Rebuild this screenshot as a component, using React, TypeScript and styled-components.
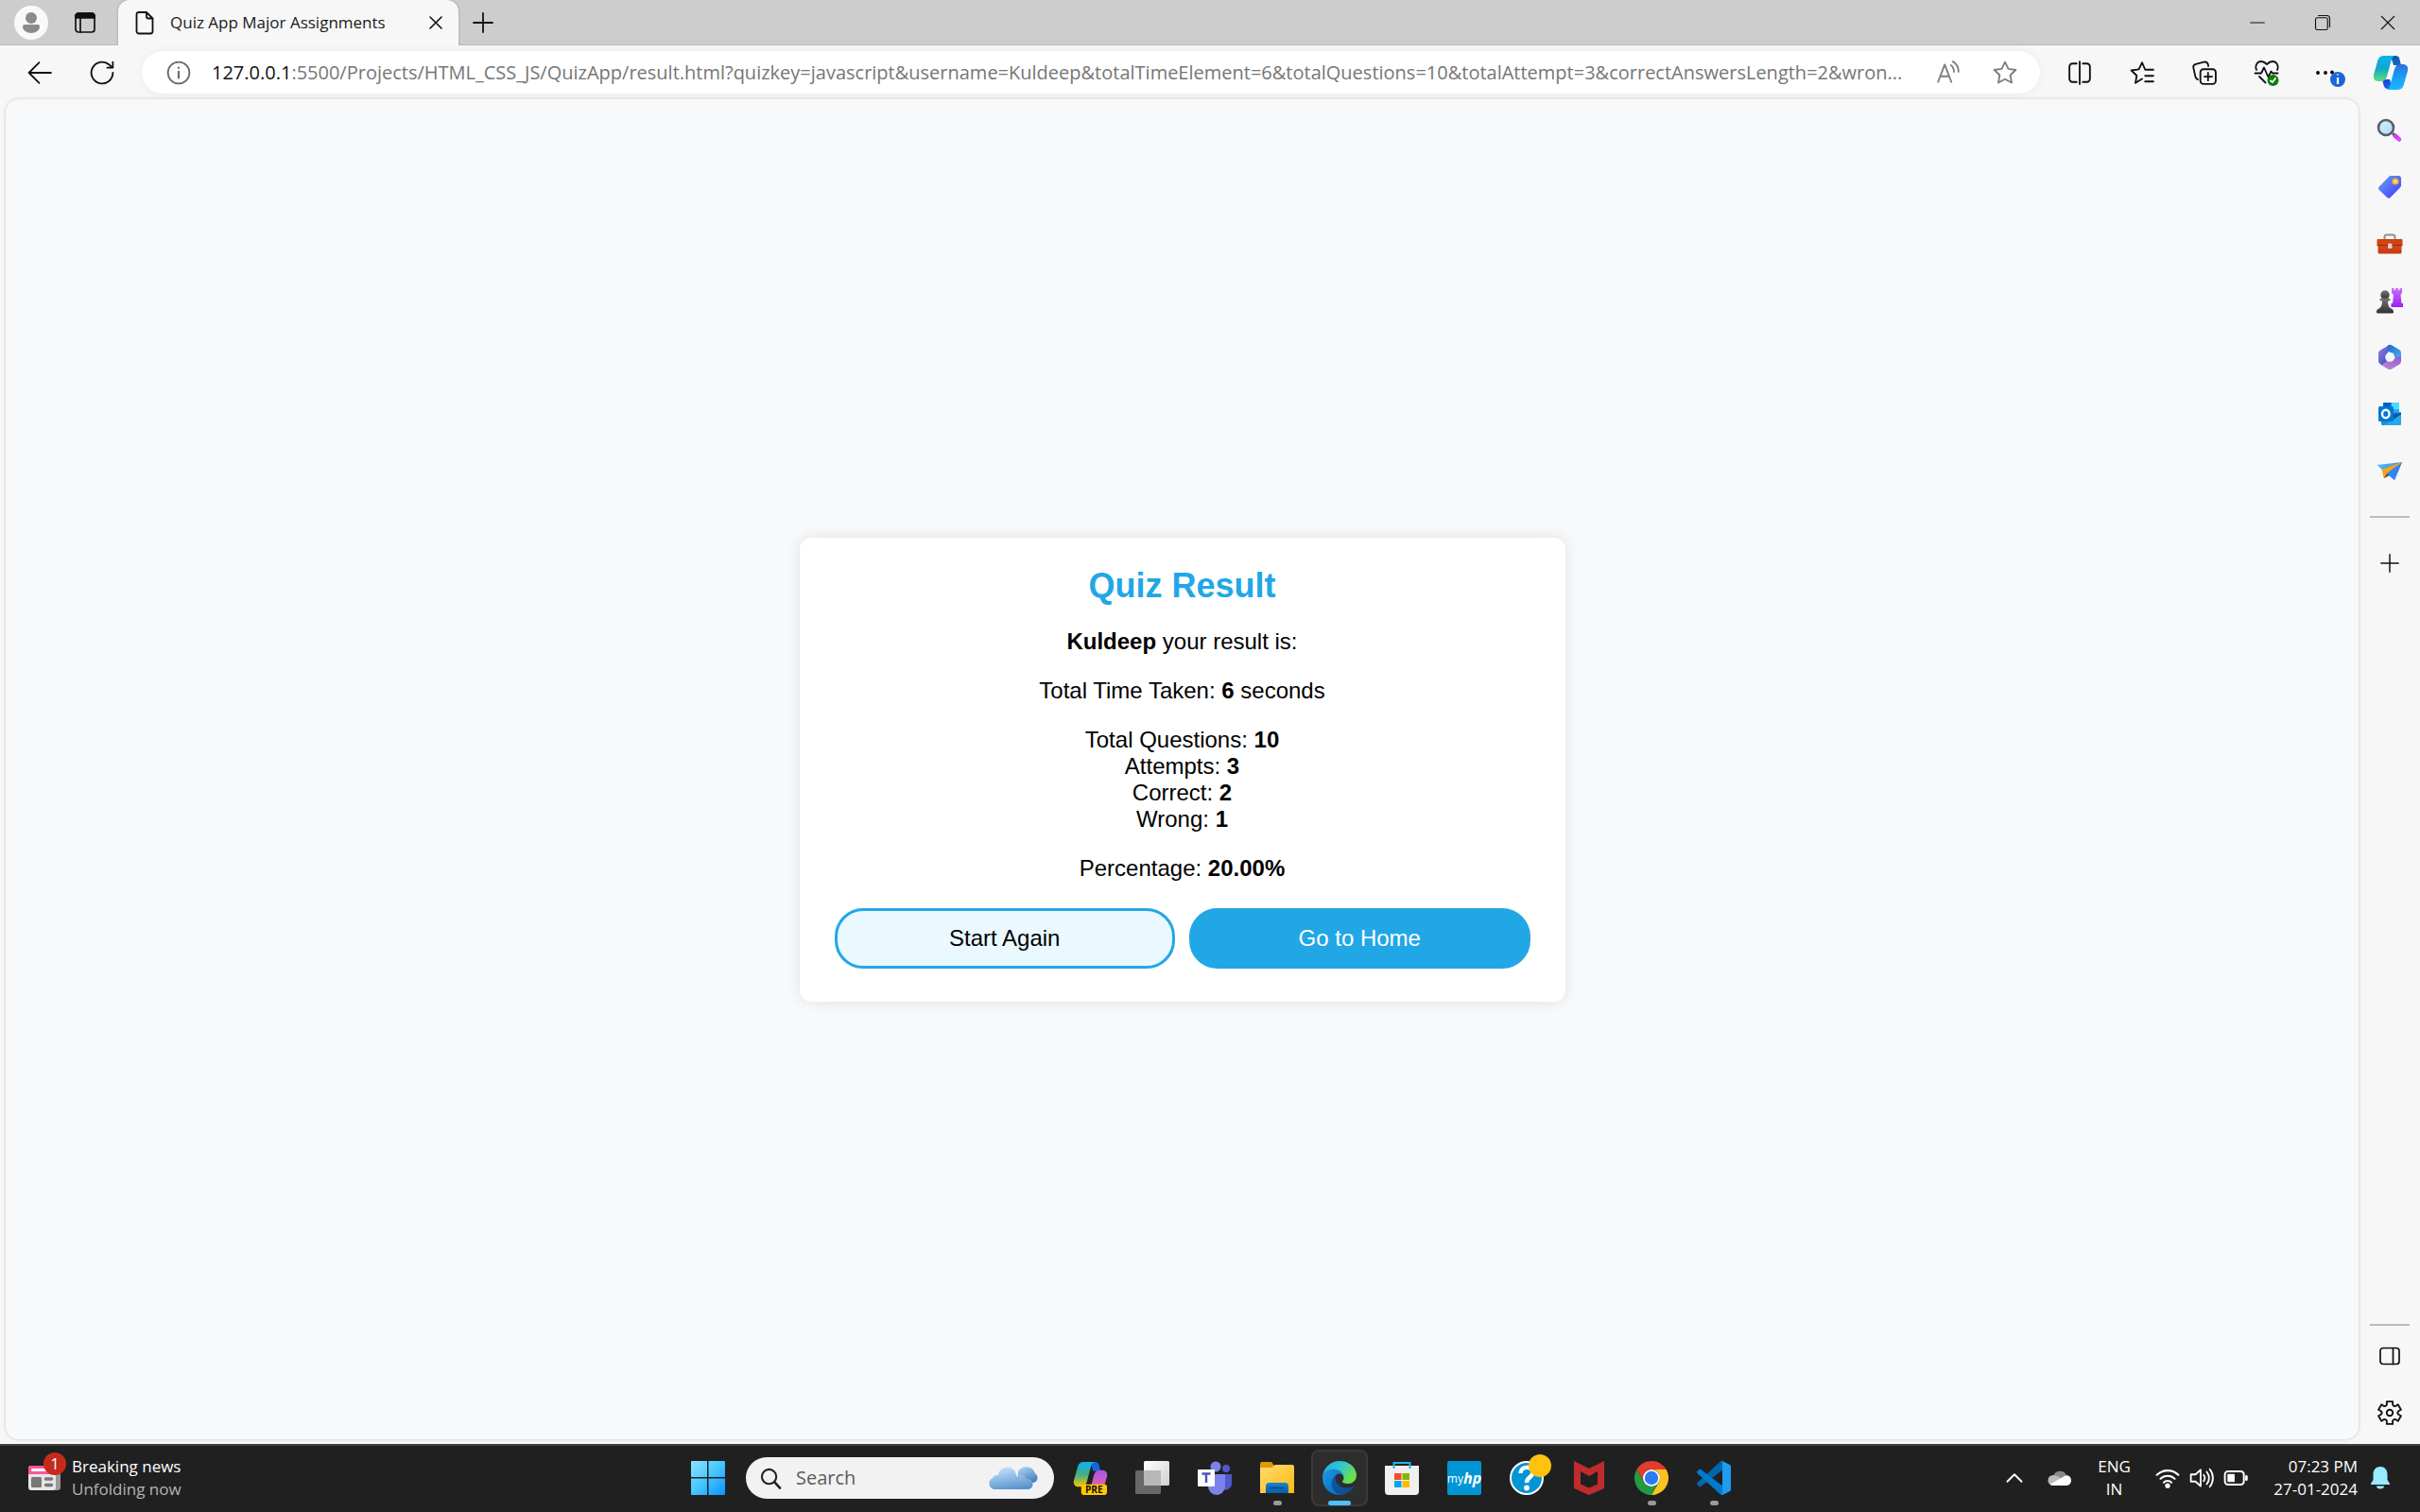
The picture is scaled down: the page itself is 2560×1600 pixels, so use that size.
import React from "react";
import styled, { createGlobalStyle } from "styled-components";

const UI_FONT = `"Open Sans", "Noto Sans", sans-serif`;
const PAGE_FONT = `"Liberation Sans", Arial, sans-serif`;

const GlobalStyle = createGlobalStyle`
  *, *::before, *::after { box-sizing: border-box; }
  body { margin: 0; font-family: ${UI_FONT}; }
  button, input { font: inherit; }
`;

/* ---------- layout ---------- */

const Desktop = styled.div`
  display: flex;
  flex-direction: column;
  min-height: 100vh;
  background: #f7f7f7;
`;

const IconButton = styled.button<{ $w?: number; $h?: number }>`
  display: inline-flex;
  align-items: center;
  justify-content: center;
  flex: none;
  width: ${(p) => p.$w ?? 60}px;
  height: ${(p) => p.$h ?? 48}px;
  padding: 0;
  border: 0;
  background: none;
  color: #111;
  svg { display: block; }
`;

const TitleBar = styled.header`
  display: flex;
  align-items: stretch;
  height: 48px;
  background: #cdcdcd;
  box-shadow: inset 0 -1px 0 #b9b9b9;
`;

const Profile = styled.div`
  display: flex;
  align-items: center;
  padding-left: 15px;
  width: 125px;
  flex: none;
`;

const Tab = styled.div`
  display: flex;
  align-items: center;
  width: 360px;
  padding: 0 8px 0 18px;
  border-radius: 12px 12px 0 0;
  background: #f7f7f7;
  box-shadow: 0 0 3px rgba(0, 0, 0, 0.25);
  clip-path: inset(0 -4px 0 -4px);
`;

const TabTitle = styled.span`
  flex: 1;
  padding-left: 17px;
  font-size: 17px;
  line-height: 24px;
  white-space: nowrap;
  color: #1a1a1a;
`;

const WindowControls = styled.div`
  display: flex;
  margin-left: auto;
`;

const Toolbar = styled.nav`
  display: flex;
  align-items: center;
  height: 57px;
  padding-left: 9px;
`;

const AddressBar = styled.form`
  display: flex;
  align-items: center;
  flex: 1;
  min-width: 0;
  height: 45px;
  margin-left: 9px;
  padding: 0 7px 0 9px;
  border-radius: 23px;
  background: #fff;
  box-shadow: 0 0 8px rgba(0, 0, 0, 0.06);
  font-size: 20px;
  line-height: 28px;
`;

const Host = styled.label`
  padding-left: 5px;
  color: #111;
`;

const UrlInput = styled.input`
  flex: 1;
  min-width: 0;
  padding: 0;
  border: 0;
  outline: 0;
  background: none;
  color: #767676;
  text-overflow: ellipsis;
`;

const ToolGroup = styled.div`
  display: flex;
  align-items: center;
  padding-left: 9px;
`;

const Main = styled.div`
  display: flex;
  flex: 1;
`;

const Viewport = styled.main`
  display: flex;
  align-items: center;
  justify-content: center;
  flex: 1;
  margin: 0 0 5px 6px;
  border-radius: 14px;
  background: #f8f9fb;
  box-shadow: 0 0 3px 1px rgba(0, 0, 0, 0.12);
`;

const Sidebar = styled.aside`
  display: flex;
  flex-direction: column;
  align-items: center;
  width: 65px;
  padding: 3px 0;
`;

const Divider = styled.hr<{ $bottom?: boolean }>`
  width: 42px;
  height: 2px;
  margin: ${(p) => (p.$bottom ? "auto 0 2px" : "18px 0")};
  border: 0;
  background: #bdbdbd;
`;

/* ---------- result card ---------- */

const Card = styled.section`
  display: flex;
  flex-direction: column;
  gap: 24px;
  width: 810px;
  padding: 30px 37px 35px;
  border-radius: 12px;
  background: #fff;
  box-shadow: 0 0 15px rgba(0, 0, 0, 0.1);
  font-family: ${PAGE_FONT};
  font-size: 24px;
  line-height: 28px;
  text-align: center;
  color: #000;
`;

const CardTitle = styled.h1`
  margin: 0;
  font-size: 36px;
  line-height: 42px;
  color: #22a7e6;
`;

const Line = styled.p`
  margin: 0;
`;

const Actions = styled.div`
  display: flex;
  gap: 15px;
  padding-top: 4px;
`;

const ActionButton = styled.button<{ $primary?: boolean }>`
  flex: 1;
  height: 64px;
  border: 3px solid #22a7e6;
  border-radius: 30px;
  background: ${(p) => (p.$primary ? "#22a7e6" : "#eaf8ff")};
  color: ${(p) => (p.$primary ? "#fff" : "#000")};
`;

/* ---------- taskbar ---------- */

const Taskbar = styled.footer`
  display: grid;
  grid-template-columns: 1fr auto 1fr;
  align-items: center;
  height: 72px;
  padding-bottom: 2px;
  border-top: 2px solid #414141;
  background: #202020;
  color: #fff;
  font-size: 18px;
  line-height: 24px;
`;

const News = styled.button`
  display: flex;
  align-items: center;
  justify-self: start;
  padding: 0 0 0 30px;
  border: 0;
  background: none;
  color: #fff;
  text-align: left;
`;

const NewsIcon = styled.span`
  position: relative;
  display: block;
  width: 34px;
  height: 26px;
`;

const Badge = styled.span`
  position: absolute;
  right: -6px;
  top: -14px;
  width: 24px;
  height: 24px;
  border-radius: 50%;
  background: #c42b1c;
  font-size: 16px;
  text-align: center;
`;

const NewsText = styled.span`
  display: grid;
  padding-left: 12px;
  font-size: 17px;
`;

const Muted = styled.span`
  color: #b4b4b4;
`;

const Apps = styled.div`
  display: flex;
  align-items: center;
  padding-left: 2px;
`;

const SearchBox = styled.label`
  display: flex;
  align-items: center;
  width: 326px;
  height: 44px;
  margin: 0 5px 0 7px;
  padding: 0 17px 0 15px;
  border-radius: 22px;
  background: #f2f2f2;
`;

const SearchInput = styled.input`
  flex: 1;
  min-width: 0;
  padding: 0 0 0 15px;
  border: 0;
  outline: 0;
  background: none;
  font-size: 20px;
  &::placeholder { color: #5c5c5c; opacity: 1; }
`;

const AppButton = styled.button<{ $active?: boolean }>`
  position: relative;
  display: flex;
  align-items: center;
  justify-content: center;
  width: 60px;
  height: 60px;
  margin: 0 3px;
  padding: 0;
  border: ${(p) => (p.$active ? "2px solid #3a3a3a" : "0")};
  border-radius: 8px;
  background: ${(p) => (p.$active ? "#2d2d2d" : "none")};
  svg { display: block; overflow: visible; }
`;

const Indicator = styled.span<{ $active?: boolean }>`
  position: absolute;
  bottom: ${(p) => (p.$active ? -1 : 1)}px;
  width: ${(p) => (p.$active ? 24 : 9)}px;
  height: 5px;
  border-radius: 3px;
  background: ${(p) => (p.$active ? "#4cc2ff" : "#9a9a9a")};
`;

const HpTile = styled.span`
  display: flex;
  align-items: center;
  justify-content: center;
  width: 36px;
  height: 36px;
  border-radius: 2px;
  background: #0096d6;
  color: #fff;
  font: 12px "Open Sans", sans-serif;
  b { font: italic bold 16px "Open Sans", sans-serif; }
`;

const Tray = styled.div`
  display: flex;
  align-items: center;
  justify-self: end;
  padding-right: 18px;
`;

const Stack = styled.div<{ $right?: boolean }>`
  display: grid;
  text-align: ${(p) => (p.$right ? "right" : "center")};
`;

const TrayButton = styled(IconButton)`
  color: #fff;
`;

const Language = styled(Stack)`
  width: 72px;
  padding-right: 5px;
  font-size: 17px;
`;

const Clock = styled(Stack)`
  width: 111px;
  font-size: 17px;
`;

/* ---------- icons ---------- */

type LineProps = { size?: number; sw?: number; color?: string; children: React.ReactNode };

const LineIcon = ({ size = 24, sw = 1.7, color = "currentColor", children }: LineProps) => (
  <svg width={size} height={size} viewBox="0 0 24 24" fill="none" stroke={color} strokeWidth={sw} strokeLinecap="round" strokeLinejoin="round" aria-hidden="true">
    {children}
  </svg>
);

const ColorIcon = ({ size = 28, box = 28, children }: { size?: number; box?: number; children: React.ReactNode }) => (
  <svg width={size} height={size} viewBox={`0 0 ${box} ${box}`} aria-hidden="true">
    {children}
  </svg>
);

const Grad = ({ id, from, to, mid, x1 = 0, y1 = 0, x2 = 1, y2 = 1 }: { id: string; from: string; to: string; mid?: string; x1?: number; y1?: number; x2?: number; y2?: number }) => (
  <linearGradient id={id} x1={x1} y1={y1} x2={x2} y2={y2}>
    <stop offset="0" stopColor={from} />
    {mid && <stop offset=".5" stopColor={mid} />}
    <stop offset="1" stopColor={to} />
  </linearGradient>
);

const gearPath = (() => {
  const points: string[] = [];
  for (let i = 0; i < 6; i++) {
    const base = i * 60 - 90;
    ([[-15, 11.4], [15, 11.4], [19, 8.6], [30, 7.6], [41, 8.6]] as const).forEach(([offset, r]) => {
      const a = ((base + offset) * Math.PI) / 180;
      points.push(`${(12 + r * Math.cos(a)).toFixed(2)} ${(12 + r * Math.sin(a)).toFixed(2)}`);
    });
  }
  return `M${points.join("L")}Z`;
})();

const CloseGlyph = () => <LineIcon size={16}><path d="M3 3l18 18M21 3L3 21" strokeWidth="2.4" /></LineIcon>;
const PlusGlyph = () => <LineIcon size={24} sw={1.8}><path d="M12 2v20M2 12h20" /></LineIcon>;

const Copilot = ({ id, size, pre }: { id: string; size: number; pre?: boolean }) => (
  <ColorIcon size={size} box={36}>
    <defs>
      <Grad id={`${id}a`} from="#0bb4f0" mid={pre ? "#3fae8c" : "#10a7c8"} to={pre ? "#ffc400" : "#5ee07a"} x2={0} />
      <Grad id={`${id}b`} from={pre ? "#a557e8" : "#2a6fe0"} mid={pre ? "#d85bc0" : "#1a9df5"} to={pre ? "#ff7a55" : "#1cb8ff"} x2={0} />
      <Grad id={`${id}c`} from={pre ? "#0f6ad8" : "#0a5a90"} to="#1766d8" />
      <Grad id={`${id}d`} from={pre ? "#ff6a70" : "#1238d8"} to={pre ? "#ff8a60" : "#1a78f0"} />
    </defs>
    <path d="M9 25h8l3 10h-5c-3 0-4-2-4.500-4z" fill={`url(#${id}d)`} />
    <path d="M18 0h5c3 0 4 2 4.500 4l1.500 6h-8z" fill={`url(#${id}c)`} />
    <path d="M11 0h11c-2 1-3 3-3.700 6l-4 15c-1 4-3 6-6 6H5c-4 0-6-3-5-7L4 6C5 2 7 0 11 0z" fill={`url(#${id}a)`} />
    <path d="M25 36H14c2-1 3-3 3.700-6l4-15c1-4 3-6 6-6H31c4 0 6 3 5 7l-4 14c-1 4-3 6-7 6z" fill={`url(#${id}b)`} />
    {pre && <rect x="8" y="24.500" width="28" height="11.500" rx="2.500" fill="#ffc800" />}
    {pre && <text x="22" y="34" fontFamily="Open Sans, sans-serif" fontSize="10.500" fontWeight="700" textAnchor="middle" fill="#111">PRE</text>}
  </ColorIcon>
);

const SearchColor = () => (
  <ColorIcon>
    <defs><Grad id="lens" from="#d8f2ff" to="#a9d9f8" /><Grad id="handle" from="#c03cf0" to="#d84cff" /></defs>
    <path d="M17 17l3 3" stroke="#555" strokeWidth="3" />
    <path d="M19.500 19.500l4.500 4" stroke="url(#handle)" strokeWidth="4.500" strokeLinecap="round" />
    <circle cx="10" cy="11" r="8" fill="url(#lens)" stroke="#5f5f5f" strokeWidth="2.600" />
  </ColorIcon>
);

const TagColor = () => (
  <ColorIcon>
    <defs><Grad id="tag" from="#6aa5ff" to="#4038f0" /></defs>
    <path d="M15 2h8.500c1.500 0 2.500 1 2.500 2.500V12c0 1-.3 1.700-1 2.400L14.600 25c-1 1-2.400 1-3.400 0L2.800 17c-1-1-1-2.500 0-3.500L13 3c.6-.7 1.200-1 2-1z" fill="url(#tag)" />
    <circle cx="20" cy="8" r="2.500" fill="#dbe8ff" stroke="#f5b91b" strokeWidth="2" />
  </ColorIcon>
);

const ToolboxColor = () => (
  <ColorIcon>
    <defs><Grad id="box" from="#dd4f1a" to="#c43a12" x2={0} /></defs>
    <path d="M8.500 10V6.500C8.500 5 9.500 4.500 11 4.500h6c1.500 0 2.500.5 2.500 2V10" fill="none" stroke="#909090" strokeWidth="2" />
    <rect x="1.500" y="12" width="25" height="12.500" rx="1.500" fill="url(#box)" />
    <path d="M1.500 9h25a1 1 0 0 1 1 1v5H.5v-5a1 1 0 0 1 1-1z" fill="#d3430f" />
    <path d="M.5 15h27v1.200H.5z" fill="#a52c0a" />
    <rect x="12" y="13.500" width="4.500" height="5.500" rx="1.500" fill="#d5d5d5" />
  </ColorIcon>
);

const ChessColor = () => (
  <ColorIcon>
    <defs><Grad id="rook" from="#c573f5" to="#a01df5" x2={0} /><Grad id="pawn" from="#777" to="#303030" x2={0} /></defs>
    <path d="M16 1h2.500v2H20V1h3v2h1.500V1H27v5l-1.500 2 1 9h1.500v4H15.500v-4H17l1-9-2-2z" fill="url(#rook)" />
    <circle cx="9" cy="8" r="4.700" fill="url(#pawn)" />
    <path d="M3.500 13c0-1 1-1.500 2-1.500h7c1 0 2 .5 2 1.500s-1 1.500-2.500 1.500c.3 5 1 6.500 3.500 8 2 1 2.500 2 2.500 3.500 0 1-.6 1.500-1.500 1.500h-15C.6 27.500 0 27 0 26c0-1.500.5-2.500 2.500-3.500 2.500-1.500 3.200-3 3.500-8-1.500 0-2.500-.5-2.500-1.500z" fill="url(#pawn)" />
  </ColorIcon>
);

const M365 = () => (
  <ColorIcon>
    <defs>
      <Grad id="ma" from="#2c5fc8" to="#3eb9ef" /><Grad id="mb" from="#9b7de8" to="#2c4fb8" /><Grad id="mc" from="#8a5fd0" to="#c58ad8" x1={1} x2={0} />
    </defs>
    <path d="M14 .8L4.200 6.500C2.800 7.300 2 8.500 2 10v8c0 1.500.8 2.700 2.200 3.500L6 22.500l6-4.500V6z" fill="url(#mb)" />
    <path d="M12 1.300c1.300-.7 2.700-.7 4 0l8 4.700c1.300.8 2 2 2 3.500V17l-7-3-1-4-6-2-2 1z" fill="url(#ma)" />
    <path d="M26 13v5.300c0 1.500-.7 2.700-2 3.500l-8 4.700c-1.300.7-2.700.7-4 0L4 21.800c3.500.6 5-1.300 7-3.300l6-.5 3-4z" fill="url(#mc)" />
    <circle cx="14" cy="14" r="4.800" fill="#f7f7f7" />
  </ColorIcon>
);

const Outlook = () => (
  <ColorIcon>
    <path d="M7 2h17v13H7z" fill="#28a8ea" /><path d="M15.500 2H24v7h-8.500z" fill="#50d9ff" /><path d="M7 2h8.500v6H7z" fill="#0364b8" />
    <path d="M5 14l21-2v12.500c0 .8-.7 1.500-1.500 1.500h-18C5.700 26 5 25.300 5 24.500z" fill="#1490df" />
    <path d="M26 13L8 26h16.500c.8 0 1.500-.7 1.500-1.500z" fill="#28a8ea" /><path d="M16 14l10-1v1.500l-9 6z" fill="#0a58a0" />
    <rect x="2" y="6" width="16" height="16" rx="1.500" fill="#0078d4" />
    <ellipse cx="9.800" cy="14" rx="3.800" ry="4.200" fill="none" stroke="#fff" strokeWidth="2.400" />
  </ColorIcon>
);

const PaperPlane = () => (
  <ColorIcon>
    <defs><Grad id="plane" from="#58c8fa" to="#2264e0" /></defs>
    <path d="M.5 8L27 5l-8 19-6-5-5 3-2-9z" fill="url(#plane)" />
    <path d="M27 5L5.500 13 8 22l3-5z" fill="#f3a51b" /><path d="M8 22l3-5 3 2z" fill="#7b4a1a" /><path d="M27 5L11 17l8 7z" fill="#3284f2" />
    <path d="M27 5.500L5.500 13l2 4.500 2-1z" fill="#f3a51b" />
  </ColorIcon>
);

const WindowsLogo = () => (
  <ColorIcon size={36} box={36}>
    <defs><Grad id="win" from="#8be4ff" mid="#45c7ff" to="#0a92ff" /></defs>
    <path d="M1 0h16v17H0V1a1 1 0 0 1 1-1zM18.500 0H35a1 1 0 0 1 1 1v16H18.500zM0 18.500h17V36H1a1 1 0 0 1-1-1zM18.500 18.500H36V35a1 1 0 0 1-1 1H18.500z" fill="url(#win)" />
  </ColorIcon>
);

const CloudArt = () => (
  <svg width="54" height="26" viewBox="0 0 54 26" aria-hidden="true">
    <defs><Grad id="ca" from="#c5e2fb" to="#5793cc" x1={0.3} x2={0.6} /><Grad id="cb" from="#b4d6f4" to="#4a86c0" x2={0.5} /></defs>
    <path d="M33 6a10 10 0 0 1 18 2 5.500 5.500 0 0 1-2 10H33z" fill="url(#cb)" />
    <path d="M7 25a6.500 6.500 0 0 1-1-12 6 6 0 0 1 6-3 9.500 9.500 0 0 1 18-3c1 1.500 1.500 3 1.500 4.500A6.500 6.500 0 0 1 42 14a5.500 5.500 0 0 1 2 11z" fill="url(#ca)" />
  </svg>
);

const TaskView = () => (
  <ColorIcon size={36} box={36}>
    <defs><Grad id="tv" from="#fff" to="#d0d0d0" /></defs>
    <rect x="0" y="10" width="27" height="25" rx="1.500" fill="#686868" /><rect x="9" y="0" width="27" height="26" rx="1.500" fill="url(#tv)" />
    <path d="M9 10h18v16H9z" fill="#b8b8b8" />
  </ColorIcon>
);

const Teams = () => (
  <ColorIcon size={36} box={36}>
    <circle cx="19" cy="6" r="5.500" fill="#7b83eb" /><circle cx="30" cy="8" r="4" fill="#5059c9" />
    <path d="M25 14h11v10a7 7 0 0 1-10 6z" fill="#5059c9" /><path d="M10 14h19v13a9 9 0 0 1-18 0z" fill="#7b83eb" />
    <rect x="0" y="9" width="18" height="18" rx="1" fill="#fff" /><path d="M4.500 13.500h9M9 13.500V23" stroke="#4b53bc" strokeWidth="2.400" />
  </ColorIcon>
);

const Explorer = () => (
  <ColorIcon size={36} box={36}>
    <defs><Grad id="fold" from="#ffdc70" to="#fbb914" /><Grad id="tray" from="#1584d0" to="#0a5fa8" x2={0} /></defs>
    <path d="M0 3a2 2 0 0 1 2-2h10l3 4-3 4H0z" fill="#dd9a05" />
    <path d="M0 7h12l4-3h18a2 2 0 0 1 2 2v28H0z" fill="url(#fold)" />
    <path d="M6 34V27a4 4 0 0 1 4-4h16a4 4 0 0 1 4 4v7z" fill="url(#tray)" /><path d="M11 28.500h14" stroke="#074c8c" strokeWidth="2" strokeLinecap="round" />
  </ColorIcon>
);

const Edge = () => (
  <ColorIcon size={36} box={256}>
    <defs><Grad id="ea" from="#0c59a4" to="#114a8b" /><Grad id="eb" from="#1b9de2" mid="#127fd0" to="#0866b8" /><Grad id="ec" from="#2aa8e8" mid="#2fc4d4" to="#6be24a" y2={0.5} /></defs>
    <path d="M231 190.500c-3.400 1.800-6.900 3.400-10.500 4.700a101.400 101.400 0 0 1-35.900 6.500c-47.300 0-88.500-32.500-88.500-74.300a31.500 31.500 0 0 1 16.400-27.300c-42.800 1.800-53.800 46.400-53.800 72.500 0 74 68.100 81.400 82.800 81.400 7.900 0 19.800-2.300 27-4.600l1.300-.4a128.300 128.300 0 0 0 66.600-52.800 4 4 0 0 0-5.400-5.700z" fill="url(#ea)" />
    <path d="M105.700 241.400a79.200 79.200 0 0 1-22.700-21.300 80.700 80.700 0 0 1 29.500-120c3.200-1.500 8.500-4.100 15.600-4a32.400 32.400 0 0 1 25.700 13 31.900 31.900 0 0 1 6.300 18.700c0-.2 24.500-79.600-80-79.600-43.900 0-80 41.600-80 78.200a130.200 130.200 0 0 0 12.100 56 128 128 0 0 0 156.400 67 75.500 75.500 0 0 1-62.800-8z" fill="url(#eb)" />
    <path d="M152.300 148.900c-.9 1-3.400 2.500-3.400 5.600 0 2.600 1.700 5.200 4.800 7.300 14.300 10 41.400 8.600 41.500 8.600a59.600 59.600 0 0 0 30.300-8.300 61.400 61.400 0 0 0 30.400-52.900c.3-22.400-8-37.300-11.300-43.900C223.500 23.900 177.700 0 128 0A128 128 0 0 0 0 126.200c.5-36.500 36.800-66 80-66 3.500 0 23.500.3 42 10a72.600 72.600 0 0 1 30.900 29.300c6.100 10.600 7.200 24.100 7.200 29.500s-2.700 13.300-7.800 19.900z" fill="url(#ec)" />
  </ColorIcon>
);

const Store = () => (
  <ColorIcon size={36} box={36}>
    <path d="M0 5h36v27a4 4 0 0 1-4 4H4a4 4 0 0 1-4-4z" fill="#f0f0f0" />
    <path d="M9.500 8V2h17v6" fill="none" stroke="#28b2ea" strokeWidth="2" />
    <path d="M10 13h7.500v7H10z" fill="#f25022" /><path d="M18.500 13H26v7h-7.500z" fill="#7fba00" /><path d="M10 21h7.500v7H10z" fill="#00a4ef" /><path d="M18.500 21H26v7h-7.500z" fill="#ffb900" />
  </ColorIcon>
);

const Help = () => (
  <ColorIcon size={36} box={36}>
    <circle cx="18" cy="18" r="17" fill="#0096d6" stroke="#fff" strokeWidth="2" />
    <path d="M11.500 13c0-8 13-8 13-1 0 5-6.500 5-6.500 11" fill="none" stroke="#fff" strokeWidth="4.500" /><circle cx="18" cy="28.500" r="2.900" fill="#fff" />
    <circle cx="32" cy="5" r="12" fill="#ffc20e" />
  </ColorIcon>
);

const McAfee = () => (
  <ColorIcon size={36} box={36}>
    <path d="M2 0l16 8 16-8v29l-16 7-16-7zM9 11v13.500l9 4 9-4V11l-9 5z" fill="#c02b2b" fillRule="evenodd" />
  </ColorIcon>
);

const Chrome = () => (
  <ColorIcon size={36} box={44}>
    <g transform="translate(-2 -2)">
      <path d="M24 13h19.050A22 22 0 0 0 4.950 13l9.520 16.500A11 11 0 0 1 24 13z" fill="#e33b2e" />
      <path d="M33.530 29.500L24 46a22 22 0 0 0 19.050-33H24a11 11 0 0 1 9.530 16.500z" fill="#fcc31e" />
      <path d="M14.470 29.500L4.950 13A22 22 0 0 0 24 46l9.530-16.500a11 11 0 0 1-19.060 0z" fill="#249a41" />
      <circle cx="24" cy="24" r="11" fill="#fff" /><circle cx="24" cy="24" r="8.800" fill="#2a7af0" />
    </g>
  </ColorIcon>
);

const VsCode = () => (
  <ColorIcon size={36} box={100}>
    <path d="M96.500 10.800L75.900.9a6.200 6.200 0 0 0-7.100 1.200L1.300 63.600a4.200 4.200 0 0 0 0 6.200l5.500 5c1.500 1.400 3.700 1.500 5.300.2L93.400 13.400c2.700-2.100 6.600-.1 6.600 3.300v-.2c0-2.400-1.400-4.600-3.500-5.700z" fill="#0065a9" />
    <path d="M96.500 89.200l-20.600 9.900a6.200 6.200 0 0 1-7.100-1.200L1.300 36.400a4.200 4.200 0 0 1 0-6.200l5.500-5c1.500-1.400 3.700-1.500 5.300-.2l81.300 61.600c2.700 2.100 6.600.1 6.600-3.300v.2c0 2.400-1.400 4.600-3.500 5.700z" fill="#007acc" />
    <path d="M75.900 99.100a6.200 6.200 0 0 1-7.100-1.200c2.300 2.300 6.200.7 6.200-2.600V4.700c0-3.300-3.900-4.900-6.200-2.600A6.200 6.200 0 0 1 75.900.9l20.600 9.900A6.200 6.200 0 0 1 100 16.400v67.200c0 2.400-1.400 4.600-3.500 5.600z" fill="#1f9cf0" />
  </ColorIcon>
);

const NewsArt = () => (
  <svg width="34" height="26" viewBox="0 0 34 26" aria-hidden="true">
    <path d="M28 6h6v17a3 3 0 0 1-3 3h-6z" fill="#999" /><rect x="0" y="0" width="29" height="26" rx="3" fill="#e6e6e6" />
    <path d="M3 0h26v9H0V3a3 3 0 0 1 3-3z" fill="#f8559a" /><path d="M4.500 4.500H18" stroke="#fff" strokeWidth="3" strokeLinecap="round" />
    <rect x="3" y="12" width="11" height="11" rx="1.500" fill="#777" /><path d="M18.500 14h6M18.500 20.500h6" stroke="#777" strokeWidth="3.500" strokeLinecap="round" />
  </svg>
);

/* ---------- data ---------- */

const url =
  ":5500/Projects/HTML_CSS_JS/QuizApp/result.html?quizkey=javascript&username=Kuldeep&totalTimeElement=6&totalQuestions=10&totalAttempt=3&correctAnswersLength=2&wron...";

const sidebarItems = [
  { name: "Search", icon: <SearchColor /> },
  { name: "Shopping", icon: <TagColor /> },
  { name: "Tools", icon: <ToolboxColor /> },
  { name: "Games", icon: <ChessColor /> },
  { name: "Microsoft 365", icon: <M365 /> },
  { name: "Outlook", icon: <Outlook /> },
  { name: "Drop", icon: <PaperPlane /> },
];

const apps: { name: string; icon: React.ReactNode; state?: "open" | "active" }[] = [
  { name: "Copilot", icon: <Copilot id="tb" size={35} pre /> },
  { name: "Task view", icon: <TaskView /> },
  { name: "Teams", icon: <Teams /> },
  { name: "File Explorer", icon: <Explorer />, state: "open" },
  { name: "Edge", icon: <Edge />, state: "active" },
  { name: "Store", icon: <Store /> },
  { name: "HP", icon: <HpTile>my<b>hp</b></HpTile> },
  { name: "Help", icon: <Help /> },
  { name: "McAfee", icon: <McAfee /> },
  { name: "Chrome", icon: <Chrome />, state: "open" },
  { name: "VS Code", icon: <VsCode />, state: "open" },
];

const scores: [string, string][] = [
  ["Total Questions", "10"],
  ["Attempts", "3"],
  ["Correct", "2"],
  ["Wrong", "1"],
];

/* ---------- sections ---------- */

const BrowserTitle = () => (
  <TitleBar>
    <Profile>
      <IconButton $w={36} aria-label="Profile">
        <svg width="36" height="36" viewBox="0 0 36 36"><circle cx="18" cy="18" r="18" fill="#f9f9f9" /><circle cx="18" cy="13" r="6" fill="#8b8b8b" /><path d="M11 20h14a2 2 0 0 1 2 2c0 4-4 7-9 7s-9-3-9-7a2 2 0 0 1 2-2z" fill="#8b8b8b" /></svg>
      </IconButton>
      <IconButton $w={78} aria-label="Tab actions">
        <LineIcon><rect x="2" y="2" width="20" height="20" rx="3" /><path d="M2 7V5a3 3 0 0 1 3-3h14a3 3 0 0 1 3 3v2z" fill="currentColor" /><path d="M7 7v15" /></LineIcon>
      </IconButton>
    </Profile>
    <Tab>
      <svg width="20" height="26" viewBox="0 0 20 26" fill="none" stroke="#111" strokeWidth="1.800" strokeLinejoin="round"><path d="M4 2h8l6.500 6.500V22a2.500 2.500 0 0 1-2.500 2.500H4A2.500 2.500 0 0 1 1.500 22V4.500A2.500 2.500 0 0 1 4 2zM12 2v4.500a2 2 0 0 0 2 2h4.500" /></svg>
      <TabTitle>Quiz App Major Assignments</TabTitle>
      <IconButton $w={32} aria-label="Close tab"><CloseGlyph /></IconButton>
    </Tab>
    <IconButton $w={52} aria-label="New tab"><PlusGlyph /></IconButton>
    <WindowControls>
      <IconButton $w={69} aria-label="Minimize"><LineIcon size={16}><path d="M1 12h22" /></LineIcon></IconButton>
      <IconButton $w={69} aria-label="Restore"><LineIcon size={18} sw={1.500}><rect x="2" y="5" width="17" height="17" rx="2.500" /><path d="M6 2h12a4 4 0 0 1 4 4v12" /></LineIcon></IconButton>
      <IconButton $w={69} aria-label="Close"><LineIcon size={18} sw={1.500}><path d="M3 3l18 18M21 3L3 21" /></LineIcon></IconButton>
    </WindowControls>
  </TitleBar>
);

const BrowserToolbar = () => (
  <Toolbar>
    <IconButton $w={66} aria-label="Back"><LineIcon size={26}><path d="M23 12H1.500M11.500 2L1.500 12l10 10" /></LineIcon></IconButton>
    <IconButton $w={66} aria-label="Refresh"><LineIcon size={26}><path d="M22.500 12A10.500 10.500 0 1 1 19 4.200L22 7M22.500 1.500V7H17" /></LineIcon></IconButton>
    <AddressBar>
      <IconButton $w={60} $h={45} type="button" aria-label="Site information"><LineIcon size={26} color="#6b6b6b"><circle cx="12" cy="12" r="10.500" /><path d="M12 11v6M12 7v.3" strokeWidth="2" /></LineIcon></IconButton>
      <Host htmlFor="url">127.0.0.1</Host>
      <UrlInput id="url" defaultValue={url} />
      <IconButton $w={60} $h={45} type="button" aria-label="Read aloud"><LineIcon size={26} color="#7d7d7d"><path d="M2 21L8.500 4 15 21M4.500 15.500h8M14.500 4.500c2 1.500 3 3.500 3 6.500M16.500 1c3.500 2 5.500 5.500 5.500 10" /></LineIcon></IconButton>
      <IconButton $w={60} $h={45} type="button" aria-label="Add to favorites"><LineIcon size={26} color="#7d7d7d"><path d="M12 1.500l3.200 6.700 7.300 1-5.300 5.100 1.300 7.400L12 18.200l-6.500 3.500 1.300-7.400L1.500 9.200l7.300-1z" /></LineIcon></IconButton>
    </AddressBar>
    <ToolGroup>
      <IconButton $w={66} aria-label="Split screen"><LineIcon size={26}><path d="M9 3H5a3 3 0 0 0-3 3v12a3 3 0 0 0 3 3h4M15 3h4a3 3 0 0 1 3 3v12a3 3 0 0 1-3 3h-4M12 1v22" /></LineIcon></IconButton>
      <IconButton $w={66} aria-label="Favorites"><LineIcon size={26}><path d="M23 9h-8l-3-7-3.200 6.700-7.300 1 5.300 5.100L5.500 22l6.500-4M15 15h8M15 20.500h8" /></LineIcon></IconButton>
      <IconButton $w={66} aria-label="Collections"><LineIcon size={26}><rect x="8" y="8.500" width="15" height="14.500" rx="3" /><path d="M15.500 12v7.500M12 15.800h7.500M5.500 18.500C4 18 3.500 17 3.200 16L1.200 7c-.3-2 .6-3 2.300-3.500l8-2C13.500 1 15 2 15.500 4l.3 1.500" /></LineIcon></IconButton>
      <IconButton $w={66} aria-label="Browser essentials">
        <svg width="28" height="28" viewBox="0 0 28 28" fill="none" stroke="#111" strokeWidth="1.800" strokeLinejoin="round" strokeLinecap="round"><path d="M3 11C1 6 4 2 8 2c3 0 5 2 6 3 1-1 3-3 6-3 4 0 7 4 5 9M1.500 14.500H8l3-6 4.500 10 3-6 1.500 2h5.500M6 18l6.500 6.500" /><circle cx="20.500" cy="22" r="6" fill="#0f7b0f" stroke="none" /><path d="M18 22.500l2 1.500 3-4" stroke="#fff" /></svg>
      </IconButton>
      <IconButton $w={66} aria-label="Settings and more">
        <svg width="34" height="30" viewBox="0 0 34 30"><circle cx="5" cy="15" r="1.900" /><circle cx="13" cy="15" r="1.900" /><circle cx="20" cy="14.500" r="1.900" /><circle cx="26" cy="23" r="8.500" fill="#f7f7f7" /><circle cx="26" cy="22" r="8" fill="#1a66d8" /><path d="M26 16.500v1M26 20v7" stroke="#fff" strokeWidth="2.200" /></svg>
      </IconButton>
      <IconButton $w={63} aria-label="Copilot"><Copilot id="sb" size={36} /></IconButton>
    </ToolGroup>
  </Toolbar>
);

const ResultCard = () => (
  <Card>
    <CardTitle>Quiz Result</CardTitle>
    <Line><b>Kuldeep</b> your result is:</Line>
    <Line>Total Time Taken: <b>6</b> seconds</Line>
    <div>{scores.map(([label, value]) => <Line key={label}>{label}: <b>{value}</b></Line>)}</div>
    <Line>Percentage: <b>20.00%</b></Line>
    <Actions>
      <ActionButton>Start Again</ActionButton>
      <ActionButton $primary>Go to Home</ActionButton>
    </Actions>
  </Card>
);

const BrowserSidebar = () => (
  <Sidebar>
    {sidebarItems.map((item) => <IconButton key={item.name} $h={60} aria-label={item.name}>{item.icon}</IconButton>)}
    <Divider />
    <IconButton $h={60} aria-label="Customize"><LineIcon size={22} sw={1.600}><path d="M12 2v20M2 12h20" /></LineIcon></IconButton>
    <Divider $bottom />
    <IconButton $h={60} aria-label="Toggle sidebar"><LineIcon size={24}><rect x="2" y="3.500" width="20" height="17" rx="3" /><path d="M15.500 3.500v17" /></LineIcon></IconButton>
    <IconButton $h={60} aria-label="Settings"><LineIcon size={26}><path d={gearPath} /><circle cx="12" cy="12" r="3" /></LineIcon></IconButton>
  </Sidebar>
);

const SystemTaskbar = () => (
  <Taskbar>
    <News>
      <NewsIcon><NewsArt /><Badge>1</Badge></NewsIcon>
      <NewsText><span>Breaking news</span><Muted>Unfolding now</Muted></NewsText>
    </News>
    <Apps>
      <AppButton aria-label="Start"><WindowsLogo /></AppButton>
      <SearchBox>
        <LineIcon size={23} sw={2.200} color="#222"><circle cx="10" cy="10" r="8" /><path d="M16 16l6 6.500" strokeWidth="2.800" /></LineIcon>
        <SearchInput placeholder="Search" aria-label="Search" />
        <CloudArt />
      </SearchBox>
      {apps.map((app) => (
        <AppButton key={app.name} $active={app.state === "active"} aria-label={app.name}>
          {app.icon}
          {app.state && <Indicator $active={app.state === "active"} />}
        </AppButton>
      ))}
    </Apps>
    <Tray>
      <TrayButton $w={48} aria-label="Hidden icons"><LineIcon size={18} sw={2.600}><path d="M2 17L12 7l10 10" /></LineIcon></TrayButton>
      <TrayButton $w={48} aria-label="OneDrive">
        <svg width="26" height="18" viewBox="0 0 26 18"><path d="M6 7a7.500 7.500 0 0 1 14-1l-8 5z" fill="#8a8a8a" /><path d="M6 17a5.500 5.500 0 0 1 0-11c3 0 5 1 9 4z" fill="#bcbcbc" /><path d="M3 15.500l14-8c4-3 8 0 8 4 0 3-2 5.500-5 5.500H6c-1.500 0-2.500-.5-3-1.500z" fill="#fff" /></svg>
      </TrayButton>
      <Language><span>ENG</span><span>IN</span></Language>
      <TrayButton $w={36} aria-label="Wi-Fi"><LineIcon size={26} sw={1.900}><path d="M1.500 9a15 15 0 0 1 21 0M5 12.800a10 10 0 0 1 14 0M8.300 16.300a5.300 5.300 0 0 1 7.400 0" /><circle cx="12" cy="19.500" r="1.500" fill="#fff" /></LineIcon></TrayButton>
      <TrayButton $w={36} aria-label="Volume"><LineIcon size={26} sw={1.700}><path d="M1.500 8.500H6L11 4v16l-5-4.500H1.500zM14 9c1.500 2 1.500 4 0 6M17 6c3 4 3 8 0 12M20 3.500c4 5 4 12 0 17" /></LineIcon></TrayButton>
      <TrayButton $w={36} aria-label="Battery"><LineIcon size={26} sw={1.800}><rect x="1.500" y="5.500" width="18.500" height="13" rx="3" /><rect x="4.500" y="8.500" width="6" height="7" fill="#fff" strokeWidth="1" /><path d="M22.500 10.500v3" strokeWidth="2.500" /></LineIcon></TrayButton>
      <Clock $right><span>07:23 PM</span><span>27-01-2024</span></Clock>
      <TrayButton $w={48} aria-label="Notifications">
        <svg width="20" height="24" viewBox="0 0 20 24"><path d="M10 0c4.500 0 7.500 3.500 7.500 8v6L20 18v1H0v-1l2.500-4V8C2.500 3.500 5.500 0 10 0zM6 20.500h8a4 3 0 0 1-8 0z" fill="#99ebff" /></svg>
      </TrayButton>
    </Tray>
  </Taskbar>
);

export default function App() {
  return (
    <Desktop>
      <GlobalStyle />
      <BrowserTitle />
      <BrowserToolbar />
      <Main>
        <Viewport><ResultCard /></Viewport>
        <BrowserSidebar />
      </Main>
      <SystemTaskbar />
    </Desktop>
  );
}
